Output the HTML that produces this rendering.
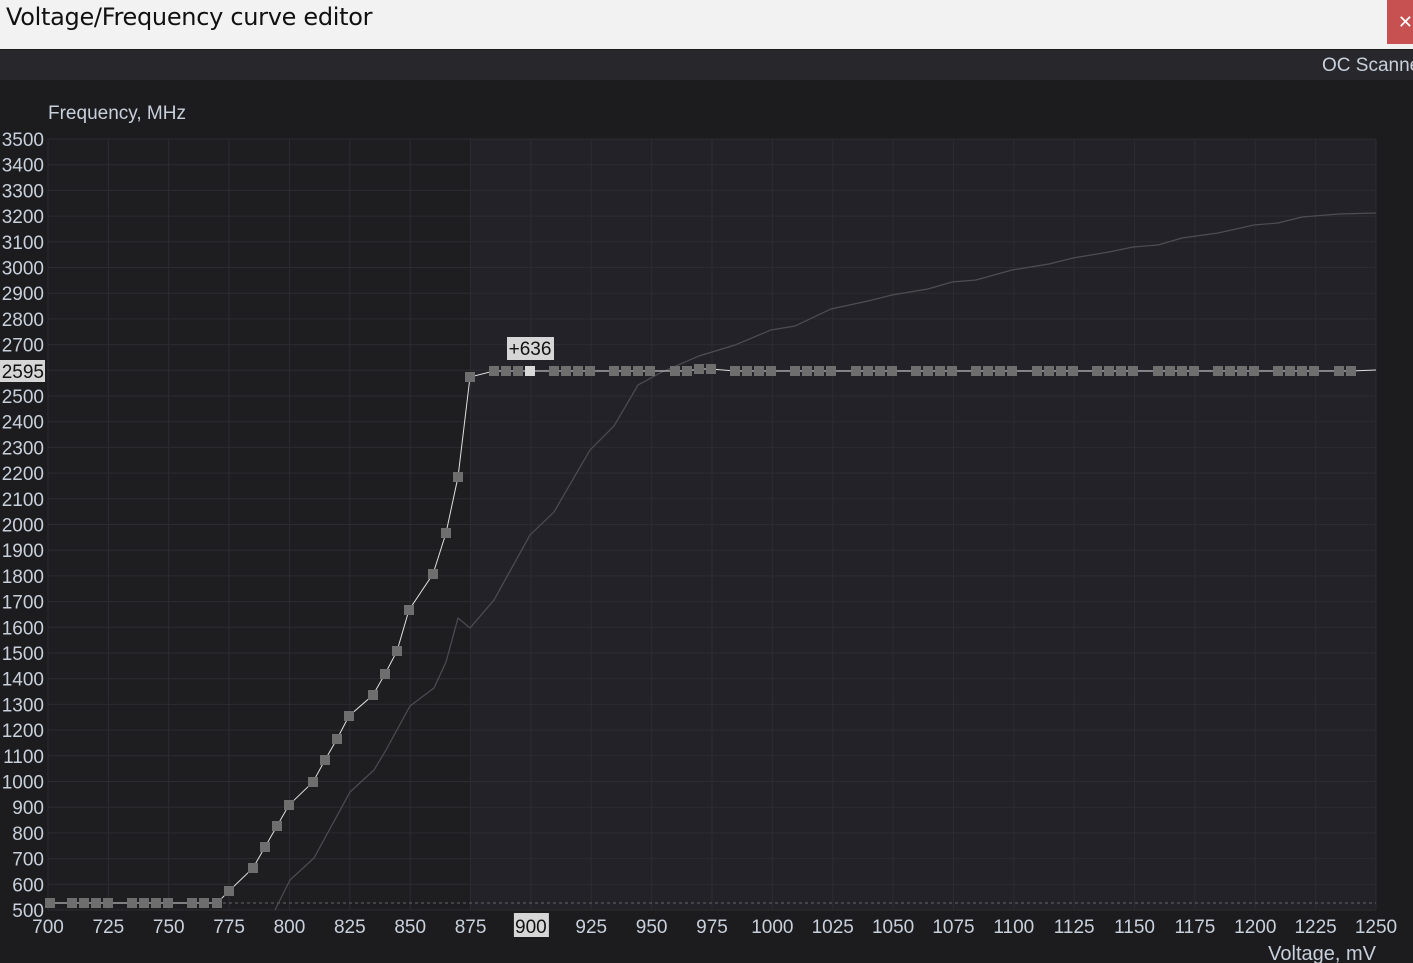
<!DOCTYPE html>
<html><head><meta charset="utf-8"><style>
html,body{margin:0;padding:0;width:1413px;height:963px;overflow:hidden;background:#1c1c1e;font-family:"Liberation Sans",sans-serif}
#title{position:absolute;left:0;top:0;width:1413px;height:49px;background:#f2f2f2}
#title span{position:absolute;left:6px;top:3px;font-size:24px;color:#111;font-family:"DejaVu Sans","Liberation Sans",sans-serif;letter-spacing:-0.3px}
#close{position:absolute;left:1387px;top:0;width:26px;height:44px;background:#c75050;color:#fff;font-size:18px;line-height:44px;text-align:right}
#bar{position:absolute;left:0;top:50px;width:1413px;height:30px;background:#28282c}
#bar span{position:absolute;left:1322px;top:5px;font-size:19px;color:#c8d0dc;white-space:nowrap}
svg{position:absolute;left:0;top:0}
</style></head><body>
<div id="title"><span>Voltage/Frequency curve editor</span></div>
<div id="close">✕</div>
<div id="bar"><span>OC Scanner</span></div>
<svg id="s" width="1413" height="963" font-family="Liberation Sans, sans-serif"></svg>
<script>
var s=document.getElementById('s'),h='';
var x0=48,x1=1376,yt=139,yb=910;
function X(v){return x0+(v-700)*(x1-x0)/550}
function Y(f){return yb-(f-500)*(yb-yt)/3000}
h+='<rect x="'+x0+'" y="'+yt+'" width="'+(x1-x0)+'" height="'+(yb-yt)+'" fill="#1e1e21"/>';
h+='<rect x="'+X(875)+'" y="'+yt+'" width="'+(x1-X(875))+'" height="'+(yb-yt)+'" fill="#222228"/>';
for(var f=500;f<=3500;f+=100){var y=Y(f);h+='<line x1="'+x0+'" x2="'+x1+'" y1="'+y+'" y2="'+y+'" stroke="#2c2c31"/>';
 h+='<text x="44" y="'+(y+7)+'" text-anchor="end" font-size="19" fill="#c8d0dc">'+f+'</text>';}
for(var v=700;v<=1250;v+=25){var x=X(v);h+='<line x1="'+x+'" x2="'+x+'" y1="'+yt+'" y2="'+yb+'" stroke="#2c2c31"/>';
 if(v==900)h+='<rect x="'+(x-17)+'" y="913" width="35" height="24" fill="#d6d6d6"/>';
 h+='<text x="'+x+'" y="933" text-anchor="middle" font-size="19" fill="'+(v==900?'#111':'#c8d0dc')+'">'+v+'</text>';}
h+='<rect x="0" y="360" width="45" height="22" fill="#d6d6d6"/><text x="44" y="378" text-anchor="end" font-size="19" fill="#111">2595</text>';
h+='<text x="48" y="119" font-size="19" fill="#c8d0dc">Frequency, MHz</text>';
h+='<text x="1376" y="960" text-anchor="end" font-size="20" fill="#c8d0dc">Voltage, mV</text>';
h+='<line x1="217" x2="1376" y1="903" y2="903" stroke="#666" stroke-dasharray="3,3"/>';
var g=[[275,910],[290,880],[314,858],[350,792],[374,770],[386,750],[410,706],[434,688],[446,662],[458,618],[470,628],[494,600],[530,535],[554,512],[590,450],[614,426],[638,385],[662,372],[699,356],[735,345],[771,330],[795,326],[831,309],[868,301],[892,295],[928,289],[952,282],[976,280],[1012,270],[1049,264],[1073,258],[1109,252],[1133,247],[1158,245],[1182,238],[1218,233],[1254,225],[1278,223],[1302,217],[1339,214],[1376,213]];
h+='<polyline fill="none" stroke="#4e4e52" stroke-width="1.2" points="'+g.join(' ')+'"/>';
var p=[];[50,72,84,96,108,132,144,156,168,192,204,217].forEach(function(x){p.push([x,903])});
[[229,891],[253,868],[265,847],[277,826],[289,805],[313,782],[325,760],[337,739],[349,716],[373,695],[385,674],[397,651],[409,610],[433,574],[446,533],[458,477],[470,377]].forEach(function(a){p.push(a)});
[494,506,518,530,554,566,578,590,614,626,638,650,675,687,699,711,735,747,759,771,795,807,819,831,856,868,880,892,916,928,940,952,976,988,1000,1012,1037,1049,1061,1073,1097,1109,1121,1133,1158,1170,1182,1194,1218,1230,1242,1254,1278,1290,1302,1314,1339,1351].forEach(function(x){p.push([x,(x==699||x==711)?369:371])});
var lp=p.slice();lp.push([1376,370]);
h+='<polyline fill="none" stroke="#e0e0e0" stroke-width="1" points="'+lp.join(' ')+'"/>';
p.forEach(function(a){h+='<rect x="'+(a[0]-5)+'" y="'+(a[1]-5)+'" width="10" height="10" fill="'+(a[0]==530?'#d8d8d8':'#6e6e6e')+'"/>'});
h+='<rect x="507" y="337" width="47" height="23" fill="#d6d6d6"/><text x="530" y="355" text-anchor="middle" font-size="19" fill="#111">+636</text>';
s.innerHTML=h;
</script>
</body></html>
